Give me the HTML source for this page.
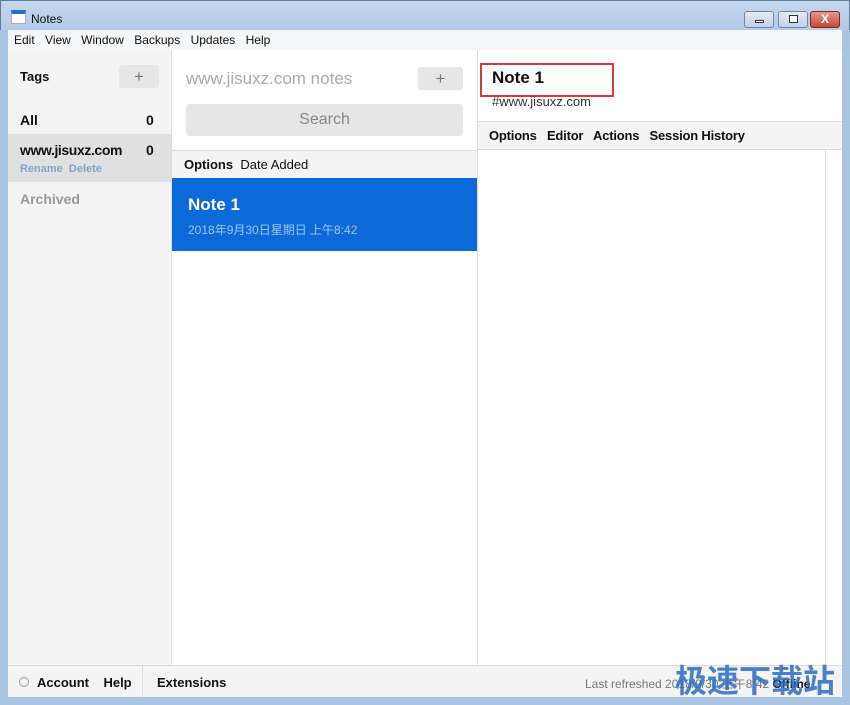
<!DOCTYPE html>
<html><head><meta charset="utf-8"><style>
*{margin:0;padding:0;box-sizing:border-box}
body{width:850px;height:705px;overflow:hidden;font-family:"Liberation Sans","Noto Sans CJK SC",sans-serif;background:#a9c4e0;position:relative;font-size:13px;color:#111}
.abs{position:absolute}
#title{left:0;top:0;width:850px;height:30px;background:linear-gradient(#c5d7ec,#b3cbe6);border:1px solid #5d7a99;border-bottom:none}
#menu{left:8px;top:30px;width:834px;height:20px;background:#f5f6f7;font-size:12px}
#menu span{margin-left:6px;margin-right:1px}
#side{left:8px;top:50px;width:164px;height:615px;background:#f4f4f4;border-right:1px solid #ddd}
#mid{left:172px;top:50px;width:306px;height:615px;background:#fff;border-right:1px solid #ddd}
#right{left:478px;top:50px;width:364px;height:615px;background:#fff}
#foot{left:8px;top:665px;width:834px;height:32px;background:#f4f4f4;border-top:1px solid #ddd;font-size:13px;font-weight:bold}
.btn{background:#e6e6e6;border-radius:3px;color:#777;text-align:center}
b{font-weight:bold}
</style></head><body>
<div id="title" class="abs">
 <div class="abs" style="left:10px;top:9px;width:15px;height:14px;background:#fff;border:1px solid #aab;border-top:4px solid #2a6ebf"></div>
 <div class="abs" style="left:30px;top:11px;font-size:12px">Notes</div>
 <div class="abs" style="left:743px;top:10px;width:30px;height:17px;border:1px solid #6d86a3;border-radius:3px;background:linear-gradient(#e4ecf5,#c1d1e4)"><div class="abs" style="left:10px;top:8px;width:9px;height:3px;border:1px solid #333;background:#fff"></div></div>
 <div class="abs" style="left:777px;top:10px;width:30px;height:17px;border:1px solid #6d86a3;border-radius:3px;background:linear-gradient(#e4ecf5,#c1d1e4)"><div class="abs" style="left:10px;top:3px;width:9px;height:8px;border:1px solid #333;background:#fff"></div></div>
 <div class="abs" style="left:809px;top:10px;width:30px;height:17px;border:1px solid #7a2a22;border-radius:3px;background:linear-gradient(#e59b8e,#c44731);color:#fff;font-weight:bold;font-size:12px;text-align:center;line-height:15px">X</div>
</div>
<div id="menu" class="abs" style="line-height:20px"><span>Edit</span> <span>View</span> <span>Window</span> <span>Backups</span> <span>Updates</span> <span>Help</span></div>
<div id="side" class="abs">
 <div class="abs" style="left:12px;top:19px;font-size:13px;font-weight:bold">Tags</div>
 <div class="abs btn" style="left:111px;top:15px;width:40px;height:23px;line-height:23px;font-size:17px">+</div>
 <div class="abs" style="left:12px;top:62px;font-size:14px;font-weight:bold">All</div>
 <div class="abs" style="left:138px;top:62px;font-size:14px;font-weight:bold">0</div>
 <div class="abs" style="left:0;top:84px;width:163px;height:48px;background:#e0e0e0"></div>
 <div class="abs" style="left:12px;top:92px;font-size:14px;font-weight:bold;letter-spacing:-0.4px">www.jisuxz.com</div>
 <div class="abs" style="left:138px;top:92px;font-size:14px;font-weight:bold">0</div>
 <div class="abs" style="left:12px;top:113px;font-size:11px;color:#7fa4d0;font-weight:bold">Rename&nbsp; Delete</div>
 <div class="abs" style="left:12px;top:141px;font-size:14px;color:#999;font-weight:bold">Archived</div>
</div>
<div id="mid" class="abs">
 <div class="abs" style="left:14px;top:19px;font-size:17px;color:#aaa">www.jisuxz.com notes</div>
 <div class="abs btn" style="left:246px;top:17px;width:45px;height:23px;line-height:23px;font-size:17px">+</div>
 <div class="abs btn" style="left:14px;top:54px;width:277px;height:32px;line-height:32px;font-size:16px;color:#888">Search</div>
 <div class="abs" style="left:0;top:100px;width:305px;height:28px;background:#f4f4f4;border-top:1px solid #ddd;font-size:13px;line-height:28px;padding-left:12px"><b>Options</b>&nbsp; Date Added</div>
 <div class="abs" style="left:0;top:128px;width:305px;height:73px;background:#0b6ad8">
  <div class="abs" style="left:16px;top:17px;color:#fff;font-size:17px;font-weight:bold">Note 1</div>
  <div class="abs" style="left:16px;top:43px;color:#9ec4ef;font-size:12px">2018年9月30日星期日 上午8:42</div>
 </div>
</div>
<div id="right" class="abs">
 <div class="abs" style="left:2px;top:13px;width:134px;height:34px;border:2px solid #d43c3c"></div>
 <div class="abs" style="left:14px;top:18px;font-size:17px;font-weight:bold">Note 1</div>
 <div class="abs" style="left:14px;top:44px;font-size:13px;color:#333">#www.jisuxz.com</div>
 <div class="abs" style="left:0;top:71px;width:364px;height:29px;background:#f4f4f4;border-top:1px solid #ddd;border-bottom:1px solid #ddd;font-size:13px;font-weight:bold;line-height:28px;padding-left:11px;letter-spacing:-0.2px">Options&nbsp;&nbsp; Editor&nbsp;&nbsp; Actions&nbsp;&nbsp; Session History</div>
 <div class="abs" style="left:347px;top:100px;width:1px;height:515px;background:#ddd"></div>
</div>
<div id="foot" class="abs">
 <div class="abs" style="left:11px;top:11px;width:10px;height:10px;border:1px solid #999;border-radius:50%"></div>
 <div class="abs" style="left:29px;top:9px">Account&nbsp;&nbsp;&nbsp; Help</div>
 <div class="abs" style="left:134px;top:0;width:1px;height:32px;background:#ddd"></div>
 <div class="abs" style="left:149px;top:9px">Extensions</div>
 <div class="abs" style="left:577px;top:9px;font-weight:normal;color:#777;font-size:12px">Last refreshed 2018/9/30 上午8:42 <b style="color:#111">Offline</b></div>
 <div class="abs" style="left:667px;top:-10px;font-size:32px;font-weight:bold;color:#2d6cc0;opacity:.85">极速下载站</div>
</div>
</body></html>
